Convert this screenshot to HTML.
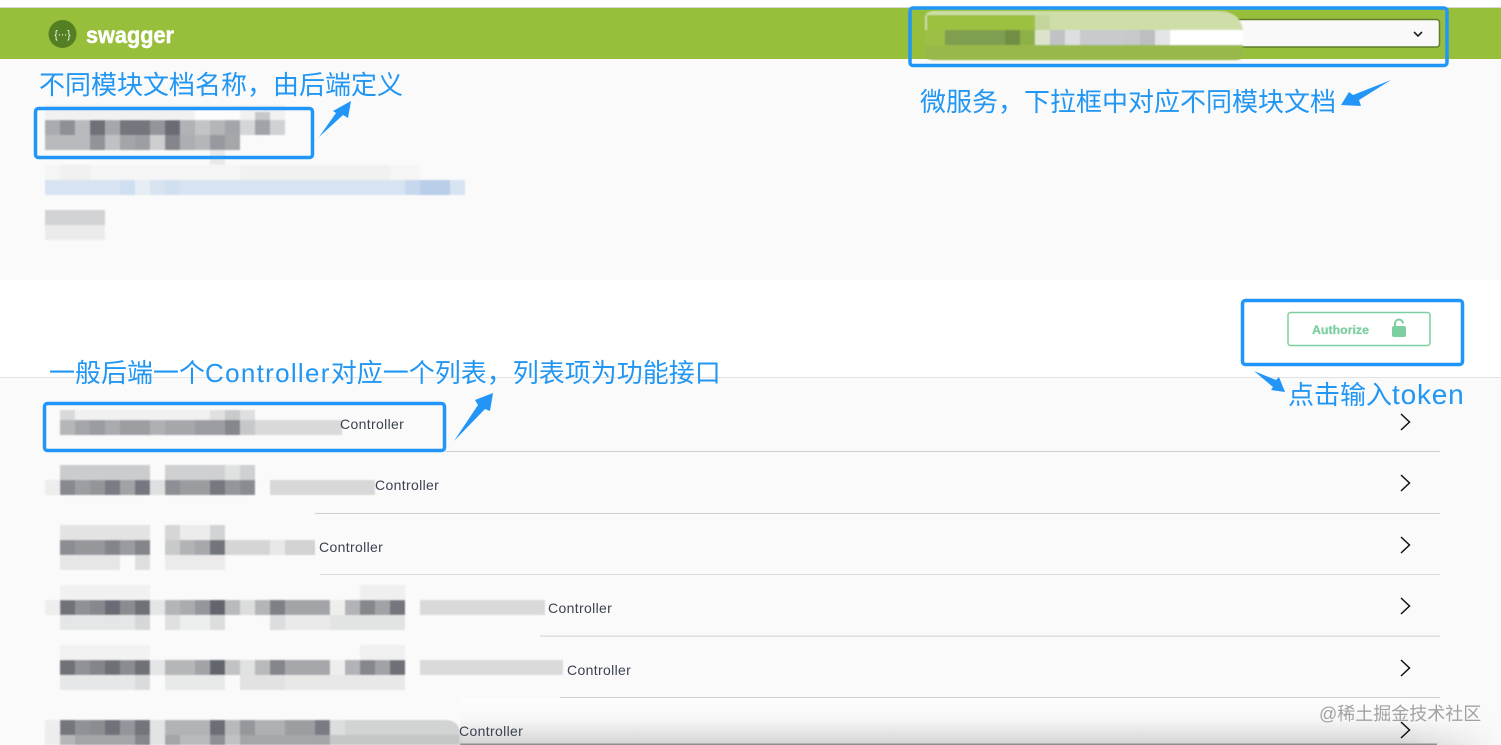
<!DOCTYPE html>
<html lang="zh"><head><meta charset="utf-8"><title>Swagger</title>
<style>
html,body{margin:0;padding:0;width:1501px;height:745px;overflow:hidden;background:#fafafa}
svg{display:block}
.cn{font-family:"Liberation Sans","Noto Sans CJK SC",sans-serif;font-size:26px;fill:#2196f3}
.c{font-family:"Liberation Sans",sans-serif;font-size:14px;fill:#3b4151;letter-spacing:.35px}
</style></head><body>
<svg width="1501" height="745" viewBox="0 0 1501 745" xmlns="http://www.w3.org/2000/svg">
<defs>
<filter id="b" x="-5%" y="-5%" width="110%" height="110%"><feGaussianBlur stdDeviation="0.7"/></filter>
<linearGradient id="sh" x1="0" y1="0" x2="0" y2="1"><stop offset="0" stop-color="#fff" stop-opacity=".5"/><stop offset=".45" stop-color="#f6f6f6" stop-opacity=".9"/><stop offset="1" stop-color="#d2d2d2"/></linearGradient>
<linearGradient id="fx" x1="0" y1="0" x2="1" y2="0"><stop offset="0" stop-color="#fff"/><stop offset=".9" stop-color="#fff"/><stop offset="1" stop-color="#000"/></linearGradient>
<mask id="m"><rect x="460" y="698" width="1041" height="47" fill="url(#fx)"/></mask>
</defs>
<rect width="1501" height="745" fill="#fafafa"/>
<rect width="1501" height="8" fill="#fff"/>
<rect y="7" width="1501" height="1" fill="#d8d8d8"/>
<rect y="8" width="1501" height="51" fill="#97bf3b"/>
<rect y="280" width="1501" height="97" fill="#fff"/>
<rect y="377" width="1501" height="1" fill="#e2e2e2"/>

<!-- logo -->
<circle cx="62.5" cy="34" r="14" fill="#547f23"/>
<text x="54.5" y="38" font-family="Liberation Sans,sans-serif" font-size="11" fill="#fff" textLength="16" lengthAdjust="spacingAndGlyphs">{···}</text>
<text x="86" y="43" font-family="Liberation Sans,sans-serif" font-weight="700" font-size="23" fill="#fff" stroke="#fff" stroke-width=".5" textLength="88" lengthAdjust="spacingAndGlyphs">swagger</text>

<!-- select -->
<rect x="1170" y="19.5" width="269.5" height="27.5" rx="3" fill="#f9f9f9" stroke="#5f7d2a" stroke-width="1.5"/>
<path d="M1414 32l4 4 4-4" fill="none" stroke="#222" stroke-width="1.6"/>
<g filter="url(#b)">
<path d="M925 18q0-7 10-7h283q22 0 25 19H925z" fill="#cfdea9"/>
<rect x="927" y="15" width="108" height="15" fill="#9cc040"/>
<rect x="1035" y="15" width="15" height="15" fill="#c3d59b"/>
<rect x="925" y="30" width="20" height="15" fill="#9dbf45"/>
<rect x="945" y="30" width="60" height="15" fill="#7f9e50"/>
<rect x="1005" y="30" width="15" height="15" fill="#6f8f45"/>
<rect x="1020" y="30" width="15" height="15" fill="#8fb04a"/>
<rect x="1035" y="30" width="15" height="15" fill="#dbe4cb"/>
<rect x="1050" y="30" width="15" height="15" fill="#c0c2c6"/>
<rect x="1065" y="30" width="15" height="15" fill="#dedfe0"/>
<rect x="1080" y="30" width="45" height="15" fill="#c8cacd"/>
<rect x="1125" y="30" width="15" height="15" fill="#c6c8ca"/>
<rect x="1140" y="30" width="15" height="15" fill="#bcbec0"/>
<rect x="1155" y="30" width="15" height="15" fill="#e4e5e6"/>
<rect x="1170" y="30" width="73" height="15" fill="#fff"/>
<path d="M925 45h318v10q0 5-8 5H935q-10 0-10-5z" fill="#98b94a"/>
</g>

<!-- title mosaic -->
<g filter="url(#b)">
<rect x="45" y="105" width="240" height="15" fill="#f1f1f2"/>
<rect x="255" y="112" width="15" height="8" fill="#c6c7ca"/><rect x="195" y="110" width="45" height="10" fill="#fcfcfc"/>
<rect x="45" y="120" width="15" height="15" fill="#a9abb0"/><rect x="60" y="120" width="15" height="15" fill="#8e9096"/><rect x="75" y="120" width="15" height="15" fill="#b8babe"/><rect x="90" y="120" width="15" height="15" fill="#6f7178"/><rect x="105" y="120" width="15" height="15" fill="#a5a7ac"/><rect x="120" y="120" width="30" height="15" fill="#74767d"/><rect x="150" y="120" width="15" height="15" fill="#93959b"/><rect x="165" y="120" width="15" height="15" fill="#6a6c74"/><rect x="180" y="120" width="15" height="15" fill="#b0b2b5"/><rect x="195" y="120" width="15" height="15" fill="#c3c4c6"/><rect x="210" y="120" width="15" height="15" fill="#b3b5b8"/><rect x="225" y="120" width="15" height="15" fill="#a3a5a9"/><rect x="240" y="120" width="15" height="15" fill="#d5d6d8"/><rect x="255" y="120" width="15" height="15" fill="#a1a3a8"/><rect x="270" y="120" width="15" height="15" fill="#d0d1d4"/>
<rect x="45" y="135" width="45" height="15" fill="#b9babd"/><rect x="90" y="135" width="15" height="15" fill="#919398"/><rect x="105" y="135" width="15" height="15" fill="#c0c1c4"/><rect x="120" y="135" width="15" height="15" fill="#a3a5a9"/><rect x="135" y="135" width="15" height="15" fill="#9c9ea3"/><rect x="150" y="135" width="15" height="15" fill="#cdced0"/><rect x="165" y="135" width="15" height="15" fill="#84868c"/><rect x="180" y="135" width="15" height="15" fill="#acaeb1"/><rect x="195" y="135" width="15" height="15" fill="#b4b6b9"/><rect x="210" y="135" width="15" height="15" fill="#97999e"/><rect x="225" y="135" width="15" height="15" fill="#a5a7aa"/>
<rect x="210" y="150" width="15" height="15" fill="#e9e9ea"/>
</g>

<!-- description mosaic -->
<g filter="url(#b)">
<rect x="45" y="165" width="375" height="15" fill="#f5f5f5"/>
<rect x="60" y="165" width="30" height="15" fill="#f0f0f0"/>
<rect x="240" y="165" width="150" height="15" fill="#f1f1f1"/>
<rect x="45" y="180" width="420" height="15" fill="#d7e3f1"/>
<rect x="120" y="180" width="15" height="15" fill="#cfdef0"/>
<rect x="135" y="180" width="15" height="15" fill="#e6edf5"/>
<rect x="165" y="180" width="15" height="15" fill="#d0dff0"/>
<rect x="405" y="180" width="15" height="15" fill="#c7d8ee"/>
<rect x="420" y="180" width="30" height="15" fill="#b9cee9"/>
<rect x="45" y="210" width="60" height="15" fill="#d1d2d4"/>
<rect x="45" y="225" width="60" height="15" fill="#ebebec"/>
</g>

<!-- separators -->
<g fill="#cfcfcf">
<rect x="445" y="451" width="995" height="1"/>
<rect x="315" y="513" width="1125" height="1"/>
<rect x="320" y="574" width="1120" height="1" fill="#dcdcdc"/>
<rect x="540" y="635.5" width="900" height="1.2" fill="#d6d6d6"/>
<rect x="560" y="697" width="880" height="1"/>
</g>

<!-- bottom shadow -->
<rect x="460" y="698.500" width="1041" height="46.500" fill="url(#sh)" mask="url(#m)"/>
<rect x="460" y="743.500" width="977" height="1.500" fill="#8f8f8f"/>

<!-- list mosaic -->
<g filter="url(#b)">
<!-- row 1 -->
<rect x="60" y="410" width="195" height="10" fill="#f1f1f1"/>
<rect x="60" y="410" width="15" height="10" fill="#d8d9da"/><rect x="210" y="410" width="15" height="10" fill="#e0e0e1"/><rect x="225" y="410" width="15" height="10" fill="#c8cacb"/><rect x="240" y="410" width="15" height="10" fill="#dedfe0"/>
<rect x="60" y="420" width="15" height="15" fill="#b5b6b8"/><rect x="75" y="420" width="15" height="15" fill="#a3a5a9"/><rect x="90" y="420" width="15" height="15" fill="#9a9ca1"/><rect x="105" y="420" width="15" height="15" fill="#a9abae"/><rect x="120" y="420" width="30" height="15" fill="#9c9ea2"/><rect x="150" y="420" width="15" height="15" fill="#aeb0b3"/><rect x="165" y="420" width="30" height="15" fill="#a5a7aa"/><rect x="195" y="420" width="30" height="15" fill="#9b9da2"/><rect x="225" y="420" width="15" height="15" fill="#85878c"/><rect x="240" y="420" width="15" height="15" fill="#c6c7c9"/><rect x="255" y="420" width="87" height="15" fill="#d9d9d9"/>
<!-- row 2 -->
<rect x="60" y="465" width="90" height="15" fill="#cbccce"/><rect x="165" y="465" width="60" height="15" fill="#cfd0d2"/><rect x="225" y="465" width="15" height="15" fill="#e0e1e1"/><rect x="240" y="465" width="15" height="15" fill="#cfd0d1"/>
<rect x="45" y="480" width="15" height="15" fill="#ededee"/>
<rect x="60" y="480" width="15" height="15" fill="#88898f"/><rect x="75" y="480" width="15" height="15" fill="#9c9ea2"/><rect x="90" y="480" width="15" height="15" fill="#939599"/><rect x="105" y="480" width="15" height="15" fill="#797b83"/><rect x="120" y="480" width="15" height="15" fill="#a0a2a5"/><rect x="135" y="480" width="15" height="15" fill="#757780"/>
<rect x="150" y="480" width="15" height="15" fill="#dedfe0"/>
<rect x="165" y="480" width="15" height="15" fill="#8d8f94"/><rect x="180" y="480" width="30" height="15" fill="#9a9ca0"/><rect x="210" y="480" width="15" height="15" fill="#767880"/><rect x="225" y="480" width="15" height="15" fill="#94969b"/><rect x="240" y="480" width="15" height="15" fill="#8a8c91"/>
<rect x="270" y="480" width="105" height="15" fill="#d8d8d8"/>
<!-- row 3 -->
<rect x="60" y="525" width="90" height="15" fill="#e3e3e4"/><rect x="165" y="525" width="15" height="15" fill="#d5d6d7"/><rect x="180" y="525" width="30" height="15" fill="#ececec"/><rect x="210" y="525" width="15" height="15" fill="#d2d3d4"/>
<rect x="60" y="540" width="15" height="15" fill="#8b8d92"/><rect x="75" y="540" width="30" height="15" fill="#95979b"/><rect x="105" y="540" width="15" height="15" fill="#83858b"/><rect x="120" y="540" width="15" height="15" fill="#999ba0"/><rect x="135" y="540" width="15" height="15" fill="#83858b"/>
<rect x="165" y="540" width="15" height="15" fill="#c8c9cb"/><rect x="180" y="540" width="15" height="15" fill="#b1b3b5"/><rect x="195" y="540" width="15" height="15" fill="#a6a8ab"/><rect x="210" y="540" width="15" height="15" fill="#72747b"/><rect x="225" y="540" width="45" height="15" fill="#d5d5d5"/><rect x="270" y="540" width="15" height="15" fill="#e8e8e8"/><rect x="285" y="540" width="30" height="15" fill="#d2d2d2"/>
<rect x="60" y="555" width="60" height="15" fill="#e6e6e7"/><rect x="135" y="555" width="15" height="15" fill="#dedfdf"/><rect x="165" y="555" width="60" height="15" fill="#ebebec"/>
<!-- row 4 -->
<rect x="60" y="585" width="90" height="15" fill="#f1f1f2"/><rect x="360" y="585" width="45" height="15" fill="#efeff0"/>
<rect x="45" y="600" width="15" height="15" fill="#eeeeef"/>
<rect x="60" y="600" width="15" height="15" fill="#707278"/><rect x="75" y="600" width="15" height="15" fill="#8f9196"/><rect x="90" y="600" width="15" height="15" fill="#86888e"/><rect x="105" y="600" width="15" height="15" fill="#6a6c74"/><rect x="120" y="600" width="15" height="15" fill="#8a8c91"/><rect x="135" y="600" width="15" height="15" fill="#6f7178"/><rect x="150" y="600" width="15" height="15" fill="#e4e5e6"/><rect x="165" y="600" width="15" height="15" fill="#b4b5b8"/><rect x="180" y="600" width="15" height="15" fill="#a9abae"/><rect x="195" y="600" width="15" height="15" fill="#94969b"/><rect x="210" y="600" width="15" height="15" fill="#63656e"/><rect x="225" y="600" width="15" height="15" fill="#b9babc"/><rect x="240" y="600" width="15" height="15" fill="#dcdddd"/><rect x="255" y="600" width="15" height="15" fill="#b4b5b7"/><rect x="270" y="600" width="15" height="15" fill="#7e8087"/><rect x="285" y="600" width="45" height="15" fill="#a2a4a8"/><rect x="330" y="600" width="15" height="15" fill="#eeeeee"/><rect x="345" y="600" width="15" height="15" fill="#b2b3b6"/><rect x="360" y="600" width="15" height="15" fill="#85878c"/><rect x="375" y="600" width="15" height="15" fill="#a0a2a6"/><rect x="390" y="600" width="15" height="15" fill="#74767d"/><rect x="420" y="600" width="125" height="15" fill="#d9d9d9"/>
<rect x="60" y="615" width="90" height="15" fill="#e5e6e7"/><rect x="135" y="615" width="15" height="15" fill="#d6d7d8"/><rect x="165" y="615" width="15" height="15" fill="#dfe0e1"/><rect x="180" y="615" width="45" height="15" fill="#edeeee"/><rect x="210" y="615" width="15" height="15" fill="#dcdddd"/><rect x="270" y="615" width="15" height="15" fill="#dcdddf"/><rect x="285" y="615" width="45" height="15" fill="#eaeaeb"/><rect x="330" y="615" width="75" height="15" fill="#e2e3e3"/>
<!-- row 5 -->
<rect x="60" y="645" width="90" height="15" fill="#f2f2f3"/><rect x="360" y="645" width="45" height="15" fill="#f0f0f1"/>
<rect x="60" y="660" width="15" height="15" fill="#707278"/><rect x="75" y="660" width="15" height="15" fill="#909297"/><rect x="90" y="660" width="15" height="15" fill="#83858b"/><rect x="105" y="660" width="15" height="15" fill="#6e7077"/><rect x="120" y="660" width="15" height="15" fill="#8a8c91"/><rect x="135" y="660" width="15" height="15" fill="#6f7178"/><rect x="150" y="660" width="15" height="15" fill="#e4e5e6"/><rect x="165" y="660" width="30" height="15" fill="#b5b6b8"/><rect x="195" y="660" width="15" height="15" fill="#a1a3a6"/><rect x="210" y="660" width="15" height="15" fill="#63656e"/><rect x="225" y="660" width="15" height="15" fill="#c1c2c4"/><rect x="240" y="660" width="15" height="15" fill="#e0e1e1"/><rect x="255" y="660" width="15" height="15" fill="#b8b9bb"/><rect x="270" y="660" width="15" height="15" fill="#84868c"/><rect x="285" y="660" width="45" height="15" fill="#a5a7aa"/><rect x="330" y="660" width="15" height="15" fill="#eeeeee"/><rect x="345" y="660" width="15" height="15" fill="#b2b3b6"/><rect x="360" y="660" width="15" height="15" fill="#85878c"/><rect x="375" y="660" width="15" height="15" fill="#a0a2a6"/><rect x="390" y="660" width="15" height="15" fill="#6e7077"/><rect x="420" y="660" width="143" height="15" fill="#dadada"/>
<rect x="60" y="675" width="90" height="15" fill="#e6e7e8"/><rect x="135" y="675" width="15" height="15" fill="#dadbdc"/><rect x="165" y="675" width="60" height="15" fill="#e8e9e9"/><rect x="240" y="675" width="45" height="15" fill="#e2e2e3"/><rect x="285" y="675" width="120" height="15" fill="#e8e8e8"/>
<!-- row 6 -->
<rect x="45" y="720" width="15" height="25" fill="#ededee"/>
<rect x="60" y="720" width="15" height="15" fill="#74767d"/><rect x="75" y="720" width="15" height="15" fill="#909297"/><rect x="90" y="720" width="15" height="15" fill="#8b8d91"/><rect x="105" y="720" width="15" height="15" fill="#70727a"/><rect x="120" y="720" width="15" height="15" fill="#92969a"/><rect x="135" y="720" width="15" height="15" fill="#72757c"/><rect x="150" y="720" width="15" height="25" fill="#e2e3e4"/><rect x="165" y="720" width="45" height="15" fill="#b2b3b5"/><rect x="210" y="720" width="15" height="15" fill="#6c6e76"/><rect x="225" y="720" width="15" height="15" fill="#b8b9bb"/><rect x="240" y="720" width="15" height="15" fill="#95979b"/><rect x="255" y="720" width="30" height="15" fill="#aeb0b2"/><rect x="285" y="720" width="30" height="15" fill="#9b9da1"/><rect x="315" y="720" width="15" height="15" fill="#7a7c84"/><rect x="330" y="720" width="15" height="15" fill="#dcdddd"/><path d="M345 720h100q15 0 15 15h-115z" fill="#d2d3d3"/>
<rect x="60" y="735" width="15" height="10" fill="#b5b6b9"/><rect x="75" y="735" width="60" height="10" fill="#a3a5a8"/><rect x="135" y="735" width="15" height="10" fill="#85878c"/><rect x="165" y="735" width="15" height="10" fill="#a4a5a8"/><rect x="180" y="735" width="45" height="10" fill="#b8b9bb"/><rect x="210" y="735" width="15" height="10" fill="#8e9095"/><rect x="225" y="735" width="15" height="10" fill="#c1c2c4"/><rect x="240" y="735" width="90" height="10" fill="#a5a6a8"/><rect x="330" y="735" width="130" height="10" fill="#c5c6c6"/>
</g>

<!-- controller labels -->
<text class="c" x="340" y="429">Controller</text>
<text class="c" x="375" y="490">Controller</text>
<text class="c" x="319" y="552">Controller</text>
<text class="c" x="548" y="613">Controller</text>
<text class="c" x="567" y="675">Controller</text>
<text class="c" x="459" y="736">Controller</text>

<!-- chevrons -->
<g fill="none" stroke="#111" stroke-width="1.5">
<path d="M1401 414l8.500 8-8.500 8"/>
<path d="M1401 475l8.500 8-8.500 8"/>
<path d="M1401 537l8.500 8-8.500 8"/>
<path d="M1401 598l8.500 8-8.500 8"/>
<path d="M1401 660l8.500 8-8.500 8"/>
<path d="M1401 722l8.500 8-8.500 8"/>
</g>

<!-- authorize -->
<rect x="1288" y="312.500" width="142" height="33" rx="2.500" fill="#fff" stroke="#7ecf9f" stroke-width="1.500"/>
<text x="1312" y="334" font-family="Liberation Sans,sans-serif" font-weight="700" font-size="12" fill="#7ecf9f" stroke="#7ecf9f" stroke-width=".3" textLength="57" lengthAdjust="spacingAndGlyphs">Authorize</text>
<rect x="1392" y="326" width="14" height="11" rx="2" fill="#7ecf9f"/>
<path d="M1395 327v-3.500a4 4 0 0 1 8 0" fill="none" stroke="#7ecf9f" stroke-width="2"/>

<!-- annotation boxes -->
<g fill="none" stroke="#2196f8" stroke-width="3.500">
<rect x="910" y="8" width="537" height="57.500" rx="3"/>
<rect x="35.500" y="108.500" width="277" height="49" rx="3"/>
<rect x="1242.500" y="300.500" width="220" height="64" rx="3"/>
<rect x="44.500" y="403.500" width="400" height="47" rx="3"/>
</g>

<!-- arrows -->
<g fill="#2196f8">
<polygon points="319,137 336,113 333,111 351,101 348,118 343,115"/>
<polygon points="1341,105 1349,92 1353,95 1391,80 1359,100 1361,106"/>
<polygon points="1254,371 1276,380 1279,377 1285,392 1271,390 1273,387"/>
<polygon points="454,441 478,405 475,400 493,393 490,411 485,409"/>
</g>

<!-- annotation text -->
<text class="cn" x="39" y="94">不同模块文档名称，由后端定义</text>
<text class="cn" x="920" y="111">微服务，下拉框中对应不同模块文档</text>
<text class="cn" x="49" y="382">一般后端一个<tspan letter-spacing="1.300">Controller</tspan>对应一个列表，列表项为功能接口</text>
<text class="cn" x="1288" y="404">点击输入<tspan font-size="28" letter-spacing=".8">token</tspan></text>

<!-- watermark -->
<text x="1319" y="720" font-family="Liberation Sans,'Noto Sans CJK SC',sans-serif" font-size="18" fill="#a2a2a2">@稀土掘金技术社区</text>
</svg>
</body></html>
